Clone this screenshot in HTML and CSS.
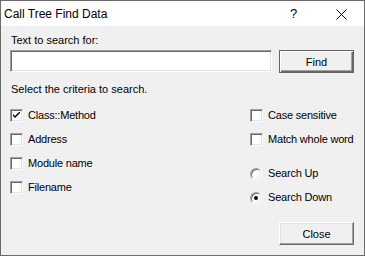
FILE: index.html
```html
<!DOCTYPE html>
<html lang="en">
<head>
  <meta charset="UTF-8">
  <title>Call Tree Find Data</title>
  <link rel="stylesheet" href="styles.css">
</head>
<body>

  <div class="window">
    <!-- Title bar -->
    <div class="titlebar">
      <span class="title">Call Tree Find Data</span>
      <span class="help">?</span>
      <span class="close-x">
        <svg width="11" height="11" viewBox="0 0 11 11"><path d="M0.5 0.5 L10.5 10.5 M10.5 0.5 L0.5 10.5" stroke="#000" stroke-width="1" fill="none"/></svg>
      </span>
    </div>

    <div class="content">
      <label class="caption" for="search-text">Text to search for:</label>
      <div class="search-row">
        <input type="text" id="search-text" class="field">
        <button class="btn btn-default">Find</button>
      </div>

      <p class="hint">Select the criteria to search.</p>

      <div class="options">
        <!-- Left column: what to search -->
        <div class="col col-left">
          <div class="option"><span class="check checked"><svg width="7" height="7" viewBox="0 0 7 7"><path d="M0 2 L0 4 L2 6 L7 1 L7 -1 L2 4 Z" fill="#000"/></svg></span>Class::Method</div>
          <div class="option"><span class="check"></span>Address</div>
          <div class="option"><span class="check"></span>Module name</div>
          <div class="option"><span class="check"></span>Filename</div>
        </div>

        <!-- Right column: matching and direction -->
        <div class="col col-right">
          <div class="option"><span class="check"></span>Case sensitive</div>
          <div class="option"><span class="check"></span>Match whole word</div>
          <div class="option radio-first"><span class="radio"></span>Search Up</div>
          <div class="option"><span class="radio selected"><i></i></span>Search Down</div>
          <button class="btn btn-close">Close</button>
        </div>
      </div>
    </div>
  </div>

</body>
</html>
```

FILE: styles.css
```css
body {
  margin: 0;
  font-family: "Liberation Sans", Arial, sans-serif;
  font-size: 11px;
  color: #000;
  background: #f0f0f0;
}
.window {
  width: 365px;
  height: 256px;
  box-sizing: border-box;
  border: 1px solid #6a6a6a;
  background: #f0f0f0;
  display: flex;
  flex-direction: column;
}
.titlebar {
  height: 25px;
  background: #fff;
  display: flex;
  align-items: center;
  padding-left: 3px;
}
.title {
  font-size: 12px;
  flex: 1;
  color: #000;
}
.help {
  font-size: 13px;
  width: 46px;
  text-align: left;
}
.close-x {
  width: 28px;
  display: flex;
  align-items: center;
  padding-top: 1px;
}
.content {
  padding: 8px 10px 0 9px;
}
.caption {
  display: block;
  line-height: 13px;
  padding-left: 1px;
}
.search-row {
  display: flex;
  justify-content: space-between;
  margin-top: 3px;
}
.field {
  width: 262px;
  height: 22px;
  box-sizing: border-box;
  margin: 0;
  border: 1px solid;
  border-color: #a0a0a0 #fff #fff #a0a0a0;
  box-shadow: inset 1px 1px 0 #696969, inset -1px -1px 0 #e3e3e3;
  background: #fff;
  outline: none;
}
.btn {
  width: 75px;
  height: 23px;
  box-sizing: border-box;
  margin: 0;
  padding: 0;
  font-family: inherit;
  font-size: 11px;
  background: #f0f0f0;
  color: #000;
  border: 1px solid;
  border-color: #fff #696969 #696969 #fff;
  box-shadow: inset -1px -1px 0 #a0a0a0, inset 1px 1px 0 #e3e3e3;
}
.btn-default {
  border: 1px solid #646464;
  box-shadow: inset 1px 1px 0 #fff, inset -1px -1px 0 #696969, inset -2px -2px 0 #a0a0a0;
}
.hint {
  margin: 10px 0 0 1px;
  line-height: 13px;
}
.options {
  display: flex;
  margin-top: 13px;
}
.col {
  display: flex;
  flex-direction: column;
}
.col-left {
  width: 240px;
}
.col-right {
  flex: 1;
}
.option {
  display: flex;
  align-items: center;
  height: 13px;
  line-height: 13px;
  margin-bottom: 11px;
  white-space: nowrap;
  letter-spacing: -0.2px;
}
.radio-first {
  margin-top: 10px;
}
.check {
  flex: none;
  width: 13px;
  height: 13px;
  box-sizing: border-box;
  border: 1px solid;
  border-color: #a0a0a0 #fff #fff #a0a0a0;
  box-shadow: inset 1px 1px 0 #696969, inset -1px -1px 0 #e3e3e3;
  background: #fff;
  margin-right: 5px;
  display: flex;
  align-items: center;
  justify-content: center;
}
.radio {
  flex: none;
  width: 12px;
  height: 12px;
  box-sizing: border-box;
  border-radius: 50%;
  border: 1px solid;
  border-color: #a0a0a0 #fff #fff #a0a0a0;
  box-shadow: inset 1px 1px 0 #696969, inset -1px -1px 0 #e3e3e3;
  background: #fff;
  margin-right: 6px;
  display: flex;
  align-items: center;
  justify-content: center;
}
.radio.selected i {
  width: 4px;
  height: 4px;
  border-radius: 50%;
  background: #000;
}
.btn-close {
  align-self: flex-end;
  margin-top: 7px;
}
```
